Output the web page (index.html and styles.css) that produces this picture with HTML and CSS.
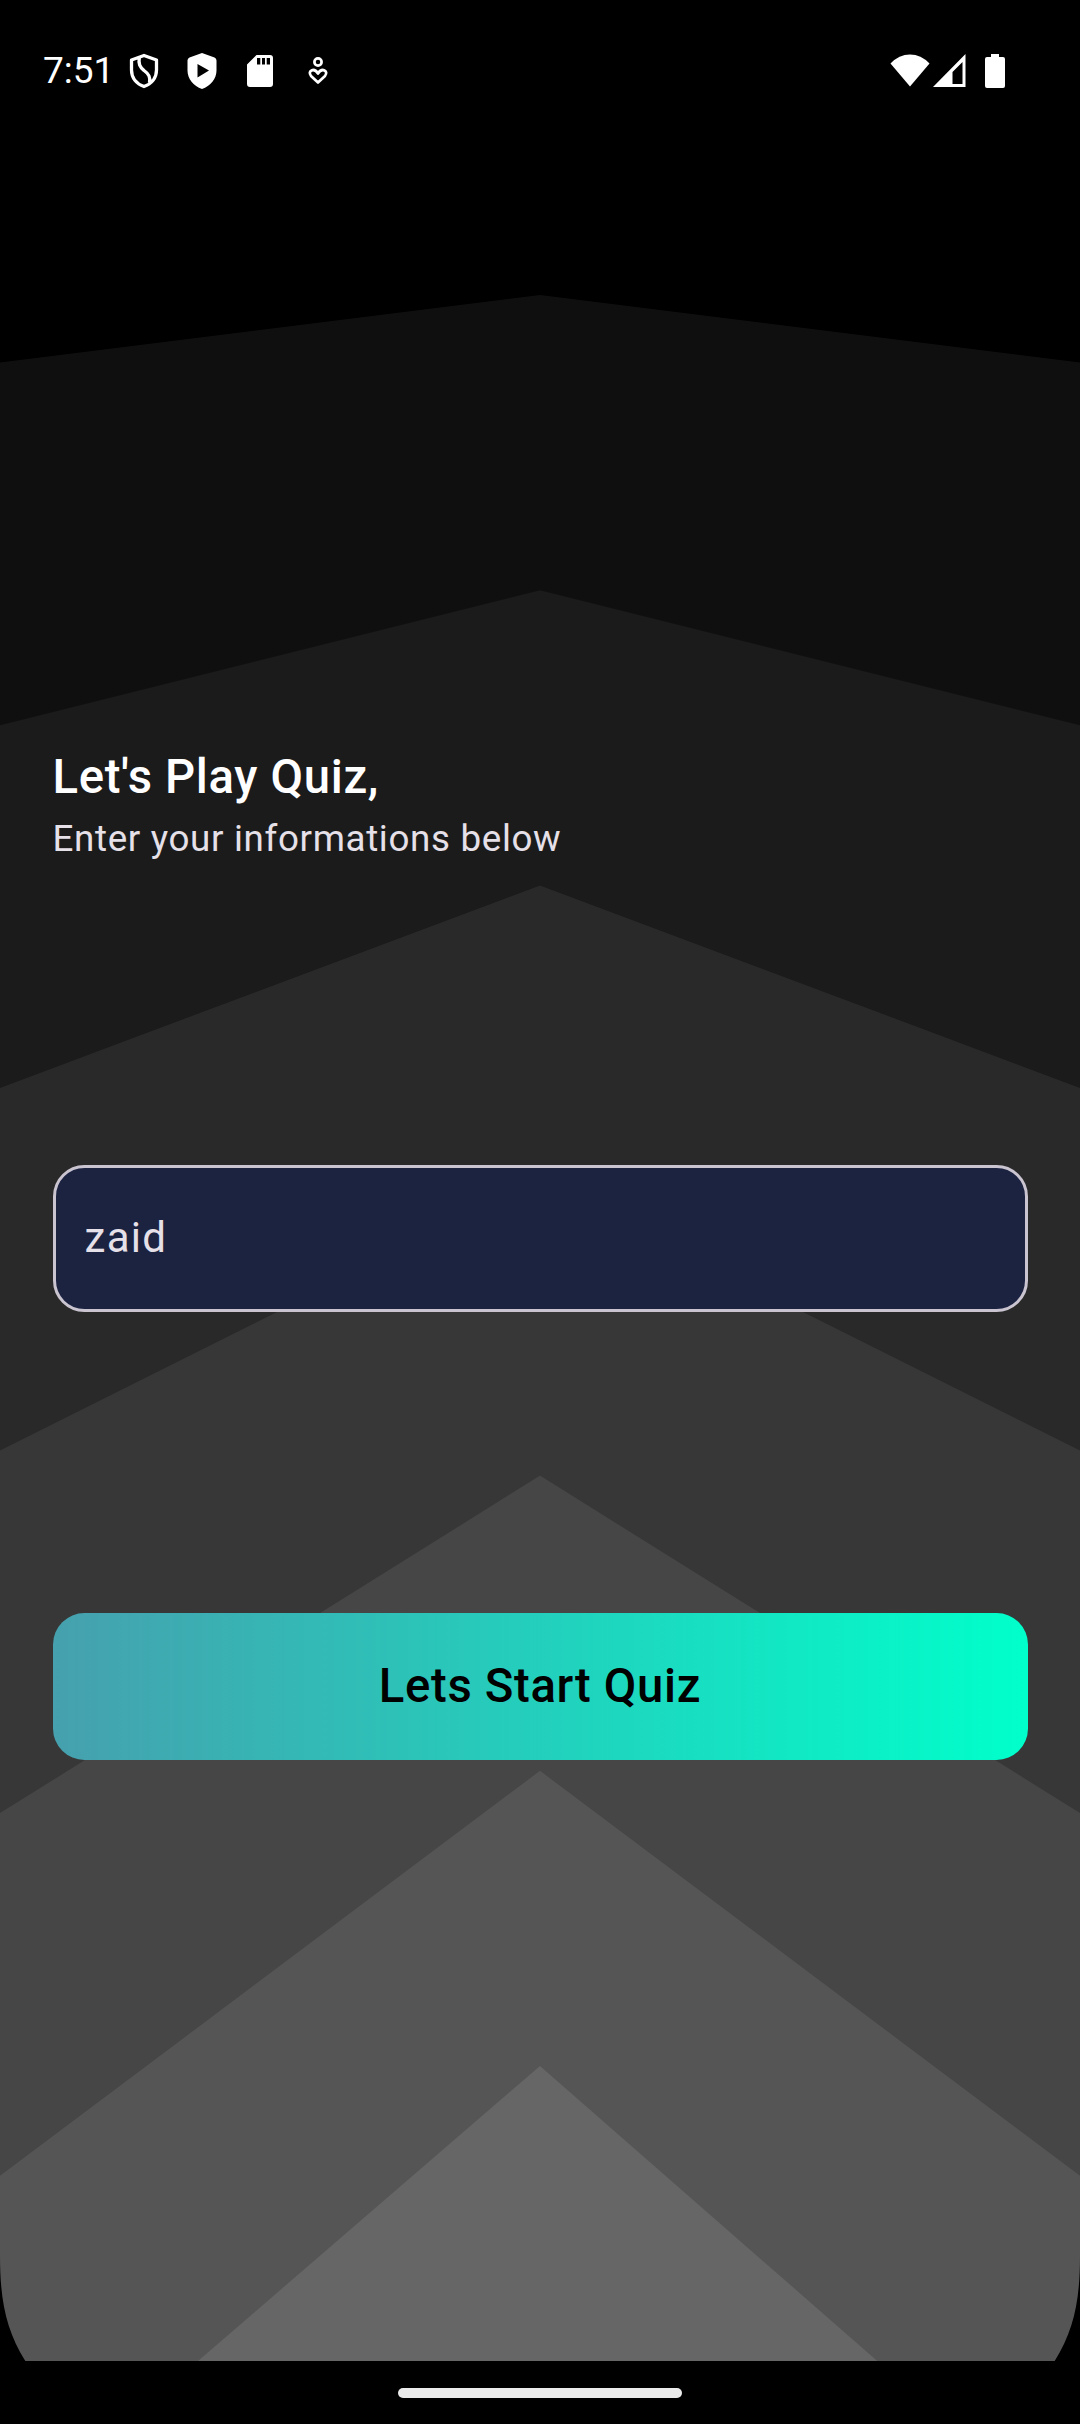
FILE: index.html
```html
<!DOCTYPE html>
<html lang="en">
<head>
<meta charset="utf-8">
<title>Quiz</title>
<link rel="stylesheet" href="styles.css">
</head>
<body>
<div class="screen">
  <svg class="backdrop" viewBox="0 0 1080 2361" aria-hidden="true">
    <path fill="#0f0f0f" d="M0 362.6 540 295.1 1080 362.6V2361H0z"/>
    <path fill="#1b1b1b" d="M0 725.3 540 590.3 1080 725.3V2361H0z"/>
    <path fill="#292929" d="M0 1087.9 540 885.4 1080 1087.9V2361H0z"/>
    <path fill="#373737" d="M0 1450.5 540 1180.5 1080 1450.5V2361H0z"/>
    <path fill="#464646" d="M0 1813.1 540 1475.6 1080 1813.1V2361H0z"/>
    <path fill="#555555" d="M0 2175.8 540 1770.8 1080 2175.8V2361H0z"/>
    <path fill="#666666" d="M198 2361 540 2065.9 877.300 2361z"/>
    <path fill="#000" d="M0 2256C0 2300 6 2330 25.3 2361H0zM1080 2256C1080 2300 1074 2330 1054.700 2361H1080z"/>
  </svg>
  <header class="status">
    <div class="status-left">
      <span class="time">7:51</span>
      <svg class="icon-shield" width="30" height="36" viewBox="0 0 30 36"><path fill="none" stroke="#fff" stroke-width="3.300" stroke-linejoin="round" d="M15 2.500 27.500 7V17C27.500 25 22.500 31 15 33.500 7.500 31 2.500 25 2.500 17V7zM10.500 4C9 11 11 14 15 17.500 20 21 21.500 24 20.500 30"/></svg>
      <svg class="icon-play" width="30" height="37" viewBox="0 0 30 37"><path fill="#fff" fill-rule="evenodd" d="M15 0 27.500 4.500Q29.500 5.300 29.500 7.500V17.500C29.500 26 23.500 33 15 36 6.500 33 .5 26 .5 17.500V7.500Q.5 5.300 2.500 4.500zM10.500 11V24.500L22 17.500z"/></svg>
      <svg class="icon-sd" width="26" height="32" viewBox="0 0 26 32"><path fill="#fff" fill-rule="evenodd" d="M9.500 0H23Q26 0 26 3V29Q26 32 23 32H3Q0 32 0 29V9.500zM10 3V9.500H13.300V3zM15 3V9.500H18V3zM19.700 3V9.500H23V3z"/></svg>
      <svg class="icon-heart" width="20" height="28" viewBox="0 0 20 28"><g fill="none" stroke="#fff" stroke-width="2.700"><circle cx="10" cy="5" r="3.600"/><path stroke-linejoin="round" d="M10 25.500 3 19C-1 14 6 10 10 16.500 14 10 21 14 17 19z"/></g></svg>
    </div>
    <div class="status-right">
      <svg class="icon-wifi" width="40" height="33" viewBox="0 0 40 33"><path fill="#fff" d="M.5 9.500Q9 .5 20 .5T39.500 9.500L20 32.500z"/></svg>
      <svg class="icon-signal" width="33" height="33" viewBox="0 0 33 33"><path fill="#fff" fill-rule="evenodd" d="M32.500 0V33H0zM29.500 8 19.500 18V30H29.500z"/></svg>
      <svg class="icon-battery" width="20" height="34" viewBox="0 0 20 34"><path fill="#fff" d="M6 0H14V3H18Q20 3 20 5V32Q20 34 18 34H2Q0 34 0 32V5Q0 3 2 3H6z"/></svg>
    </div>
  </header>
  <main class="content">
    <h1 class="title">Let's Play Quiz,</h1>
    <p class="subtitle">Enter your informations below</p>
    <div class="field">zaid</div>
    <button class="start">Lets Start Quiz</button>
  </main>
  <footer class="nav"><span class="handle"></span></footer>
</div>
</body>
</html>
```
FILE: styles.css
```css
* {
  box-sizing: border-box;
}

body {
  margin: 0;
  background: #000;
  font-family: Roboto, sans-serif;
}

.screen {
  position: relative;
  display: flex;
  flex-direction: column;
  width: 1080px;
  height: 2424px;
  background: #000;
  overflow: hidden;
}

.backdrop {
  position: absolute;
  top: 0;
  left: 0;
  width: 1080px;
  height: 2361px;
}

.status,
.content {
  position: relative;
}

.status {
  display: flex;
  justify-content: space-between;
  height: 142px;
  padding: 0 75px 0 43px;
}

.status svg {
  display: block;
}

.status-left,
.status-right {
  display: flex;
  align-items: flex-start;
}

.time {
  width: 86px;
  margin-top: 49px;
  color: #fff;
  font-size: 37px;
  line-height: 44px;
}

.icon-shield {
  margin-top: 53px;
}

.icon-play {
  margin: 53px 0 0 28px;
}

.icon-sd {
  margin: 55px 0 0 30px;
}

.icon-heart {
  margin: 57px 0 0 35px;
}

.icon-wifi {
  margin: 54px 0 0;
}

.icon-signal {
  margin: 54px 0 0 3px;
}

.icon-battery {
  margin: 54px 0 0 19px;
}

.content {
  display: flex;
  flex: 1;
  flex-direction: column;
  padding: 607px 52.5px 0;
}

.title {
  margin: 0;
  color: #fff;
  font-size: 47.25px;
  font-weight: 500;
  line-height: 56px;
  letter-spacing: 0.66px;
}

.subtitle {
  margin: 8px 0 0;
  color: #e6e0e9;
  font-size: 36.75px;
  line-height: 52px;
  letter-spacing: 0.66px;
}

.field {
  display: flex;
  align-items: center;
  height: 147px;
  margin-top: 300px;
  padding: 0 29px 2px;
  border: 3px solid #cac4d0;
  border-radius: 31.5px;
  background: #1c2341;
  color: #e6e0e9;
  font-size: 42px;
  letter-spacing: 1.3px;
}

.start {
  height: 147px;
  margin-top: 300.5px;
  padding: 0;
  border: 0;
  border-radius: 31.5px;
  background: linear-gradient(90deg, #46a0ae, #00ffcb);
  color: #000;
  font-family: inherit;
  font-size: 47.25px;
  font-weight: 500;
  letter-spacing: 0.66px;
}

.nav {
  position: relative;
  display: flex;
  justify-content: center;
  height: 63px;
  padding-top: 27px;
  background: #000;
}

.handle {
  width: 284px;
  height: 10px;
  border-radius: 5px;
  background: #ebebeb;
}
```
